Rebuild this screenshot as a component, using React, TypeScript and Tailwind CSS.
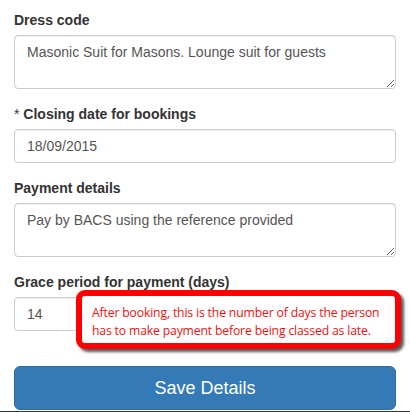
import React from 'react';

const labelCls = "block text-[14px] leading-5 font-bold text-[#333] mb-[5px]";
const fieldCls =
  "block w-full rounded-[4px] border border-[#ccc] bg-white px-3 py-[6px] text-[14px] leading-5 text-[#555] shadow-[inset_0_1px_1px_rgba(0,0,0,0.075)] outline-none";

export default function App() {
  return (
    <div className="w-[410px] h-[412px] bg-white font-['Liberation_Sans',Arial,sans-serif] flex flex-col">
      <form className="pl-[14px] pr-[14px] pt-[10px] flex-1">
        {/* Dress code */}
        <div className="mb-[15px]">
          <label className={labelCls}>Dress code</label>
          <textarea
            readOnly
            rows={2}
            defaultValue="Masonic Suit for Masons. Lounge suit for guests"
            className={fieldCls + " h-[54px] resize-y"}
          />
        </div>

        {/* Closing date */}
        <div className="mb-[15px]">
          <label className={labelCls}>
            <span className="font-normal">* </span>Closing date for bookings
          </label>
          <input readOnly defaultValue="18/09/2015" className={fieldCls + " h-[34px]"} />
        </div>

        {/* Payment */}
        <div className="mb-[15px]">
          <label className={labelCls}>Payment details</label>
          <textarea
            readOnly
            rows={2}
            defaultValue="Pay by BACS using the reference provided"
            className={fieldCls + " h-[54px] resize-y"}
          />
        </div>

        {/* Grace period + callout */}
        <div className="relative mb-[35px]">
          <label className={labelCls}>Grace period for payment (days)</label>
          <input readOnly defaultValue="14" className={fieldCls + " h-[34px]"} />

          <div className="absolute left-[62px] top-[18px] w-[325px] h-[59px] rounded-[9px] border-[6px] border-[#ff0000] bg-white pl-[10px] pt-[8px] shadow-[3px_3px_3px_rgba(0,0,0,0.65)]">
            <p className="font-['Open_Sans',sans-serif] text-[12.2px] leading-[18px] text-[#f01010] tracking-[-0.15px]">
              After booking, this is the number of days the person
              <br />
              has to make payment before being classed as late.
            </p>
          </div>
        </div>

        <button
          type="button"
          className="block w-full h-[44px] rounded-[6px] border border-[#2e6da4] bg-[#337ab7] text-white text-[18px] leading-none"
        >
          Save Details
        </button>
      </form>
      <div className="h-px bg-[#333]" />
    </div>
  );
}
